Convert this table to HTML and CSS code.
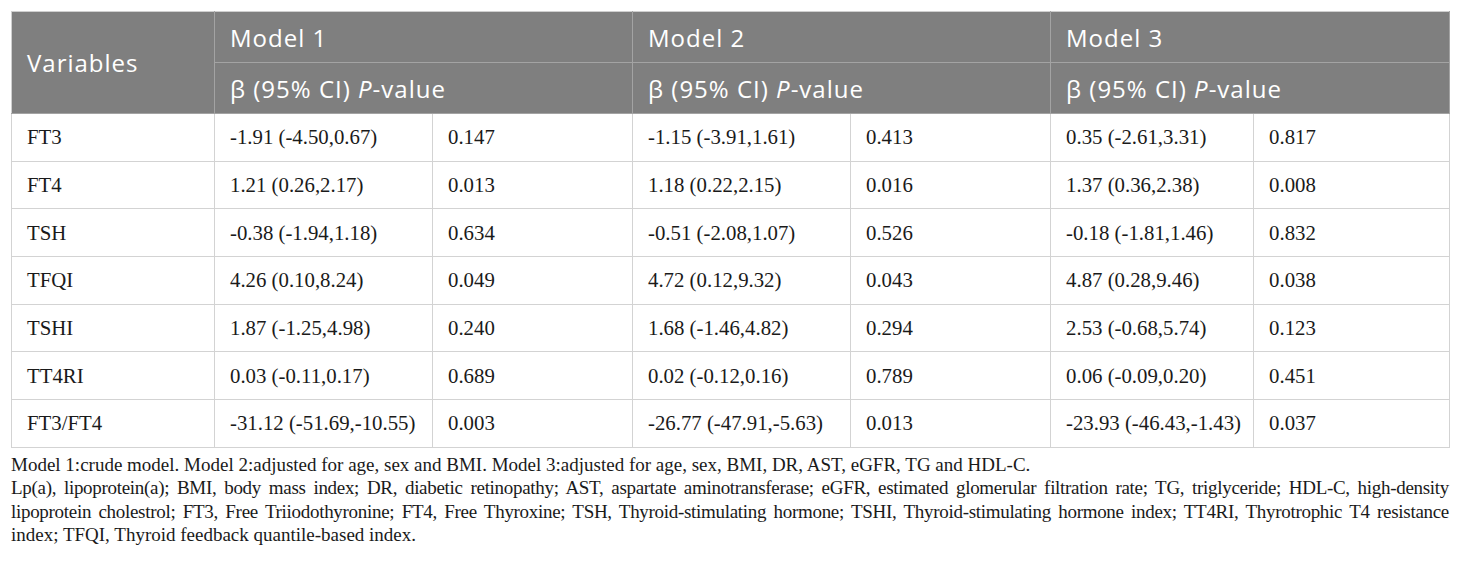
FILE: index.html
```html
<!DOCTYPE html>
<html lang="en">
<head>
  <meta charset="UTF-8">
  <title>Thyroid indices and models</title>
  <link rel="stylesheet" href="styles.css">
</head>
<body>
  <div class="wrap">
    <table class="tabela">
      <colgroup>
        <col class="c-var">
        <col class="c-beta">
        <col class="c-p">
        <col class="c-beta">
        <col class="c-p">
        <col class="c-beta3">
        <col class="c-p3">
      </colgroup>
      <thead>
        <tr>
          <th rowspan="2">Variables</th>
          <th colspan="2">Model 1</th>
          <th colspan="2">Model 2</th>
          <th colspan="2">Model 3</th>
        </tr>
        <tr>
          <th colspan="2">β (95% CI) <i>P</i>-value</th>
          <th colspan="2">β (95% CI) <i>P</i>-value</th>
          <th colspan="2">β (95% CI) <i>P</i>-value</th>
        </tr>
      </thead>
      <tbody>
        <tr><td>FT3</td><td>-1.91 (-4.50,0.67)</td><td>0.147</td><td>-1.15 (-3.91,1.61)</td><td>0.413</td><td>0.35 (-2.61,3.31)</td><td>0.817</td></tr>
        <tr><td>FT4</td><td>1.21 (0.26,2.17)</td><td>0.013</td><td>1.18 (0.22,2.15)</td><td>0.016</td><td>1.37 (0.36,2.38)</td><td>0.008</td></tr>
        <tr><td>TSH</td><td>-0.38 (-1.94,1.18)</td><td>0.634</td><td>-0.51 (-2.08,1.07)</td><td>0.526</td><td>-0.18 (-1.81,1.46)</td><td>0.832</td></tr>
        <tr><td>TFQI</td><td>4.26 (0.10,8.24)</td><td>0.049</td><td>4.72 (0.12,9.32)</td><td>0.043</td><td>4.87 (0.28,9.46)</td><td>0.038</td></tr>
        <tr><td>TSHI</td><td>1.87 (-1.25,4.98)</td><td>0.240</td><td>1.68 (-1.46,4.82)</td><td>0.294</td><td>2.53 (-0.68,5.74)</td><td>0.123</td></tr>
        <tr><td>TT4RI</td><td>0.03 (-0.11,0.17)</td><td>0.689</td><td>0.02 (-0.12,0.16)</td><td>0.789</td><td>0.06 (-0.09,0.20)</td><td>0.451</td></tr>
        <tr><td>FT3/FT4</td><td>-31.12 (-51.69,-10.55)</td><td>0.003</td><td>-26.77 (-47.91,-5.63)</td><td>0.013</td><td>-23.93 (-46.43,-1.43)</td><td>0.037</td></tr>
      </tbody>
    </table>

    <div class="notas">
      <p class="linha">Model 1:crude model. Model 2:adjusted for age, sex and BMI. Model 3:adjusted for age, sex, BMI, DR, AST, eGFR, TG and HDL-C.</p>
      <p class="linha justa">Lp(a), lipoprotein(a); BMI, body mass index; DR, diabetic retinopathy; AST, aspartate aminotransferase; eGFR, estimated glomerular filtration rate; TG, triglyceride; HDL-C, high-density</p>
      <p class="linha justa">lipoprotein cholestrol; FT3, Free Triiodothyronine; FT4, Free Thyroxine; TSH, Thyroid-stimulating hormone; TSHI, Thyroid-stimulating hormone index; TT4RI, Thyrotrophic T4 resistance</p>
      <p class="linha">index; TFQI, Thyroid feedback quantile-based index.</p>
    </div>
  </div>
</body>
</html>
```

FILE: styles.css
```css
body {
  margin: 0;
  background: #fff;
  color: #1a1a1a;
}

.wrap {
  padding: 11px 11px 0 11px;
}

.tabela {
  width: 1438px;
  border-collapse: collapse;
  table-layout: fixed;
  font-family: "Liberation Serif", "Times New Roman", serif;
  font-size: 20.8px;
}

.c-var { width: 203px; }
.c-beta { width: 218px; }
.c-p { width: 200px; }
.c-beta3 { width: 203px; }
.c-p3 { width: 196px; }

th {
  background-color: #7f7f7f;
  color: #fff;
  font-family: "Open Sans", "Noto Sans", sans-serif;
  font-weight: normal;
  font-size: 24px;
  letter-spacing: 1px;
  text-align: left;
  height: 50px;
  padding: 0 15px;
  border: 1px solid #a3a3a3;
  border-top-color: #cfcfcf;
}

thead tr:first-child th:first-child {
  border-left-color: #cfcfcf;
}

td {
  height: 46.7px;
  padding: 0 15px;
  border: 1px solid #d3d3d3;
  vertical-align: middle;
  white-space: nowrap;
}

.notas {
  margin-top: 5px;
  width: 1438px;
  font-family: "Liberation Serif", "Times New Roman", serif;
  font-size: 19px;
  line-height: 23.5px;
  color: #1a1a1a;
}

.linha {
  margin: 0;
  white-space: nowrap;
}

.justa {
  white-space: normal;
  text-align: justify;
  text-align-last: justify;
  letter-spacing: -0.3px;
  word-spacing: -1.5px;
}
```
